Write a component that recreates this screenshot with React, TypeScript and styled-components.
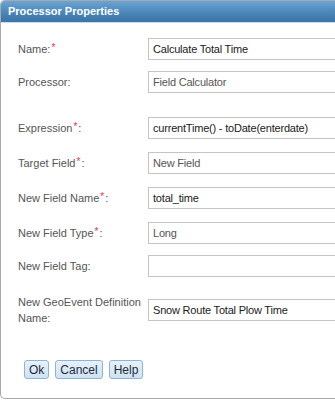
import styled, { createGlobalStyle } from 'styled-components';

const GlobalStyle = createGlobalStyle`
  html, body {
    margin: 0;
    padding: 0;
    background: #ffffff;
  }
`;

type Field = {
  label: string;
  required?: 'before' | 'after';
  value: string;
  muted?: boolean;
  top: number;
};

const fields: Field[] = [
  { label: 'Name', required: 'after', value: 'Calculate Total Time', top: 15 },
  { label: 'Processor', value: 'Field Calculator', muted: true, top: 11 },
  { label: 'Expression', required: 'before', value: 'currentTime() - toDate(enterdate)', top: 24 },
  { label: 'Target Field', required: 'before', value: 'New Field', muted: true, top: 13 },
  { label: 'New Field Name', required: 'before', value: 'total_time', top: 13 },
  { label: 'New Field Type', required: 'before', value: 'Long', muted: true, top: 13 },
  { label: 'New Field Tag', value: '', top: 11 },
  { label: 'New GeoEvent Definition Name', value: 'Snow Route Total Plow Time', top: 17 },
];

const FieldLabel = ({ label, required }: { label: string; required?: 'before' | 'after' }) => {
  if (required === 'before') {
    return (
      <Label>
        {label}
        <Star>*</Star>:
      </Label>
    );
  }
  if (required === 'after') {
    return (
      <Label>
        {`${label}:`}
        <Star>*</Star>
      </Label>
    );
  }
  return <Label>{`${label}:`}</Label>;
};

const App = () => {
  return (
    <>
      <GlobalStyle />
      <Dialog>
        <TitleBar>Processor Properties</TitleBar>
        <Body>
          {fields.map((f) => (
            <Row key={f.label} $top={f.top}>
              <FieldLabel label={f.label} required={f.required} />
              <Input $muted={f.muted}>{f.value}</Input>
            </Row>
          ))}
          <Buttons>
            <Button>Ok</Button>
            <Button>Cancel</Button>
            <Button>Help</Button>
          </Buttons>
        </Body>
      </Dialog>
    </>
  );
};

const Dialog = styled.div`
  width: 335px;
  height: 399px;
  box-sizing: border-box;
  border: 1px solid #a9a9a9;
  border-right: none;
  border-radius: 5px 0 0 5px;
  overflow: hidden;
  background: #ffffff;
  font-family: 'Liberation Sans', Arial, sans-serif;
`;

const TitleBar = styled.div`
  height: 22px;
  box-sizing: border-box;
  padding: 4px 0 0 7px;
  background: linear-gradient(#6aa5d4, #4a86b8 55%, #3b74a5);
  border-bottom: 1px solid #c8def0;
  color: #ffffff;
  font-size: 11px;
  font-weight: bold;
`;

const Body = styled.div`
  display: flex;
  flex-direction: column;
  padding-left: 17px;
`;

const Row = styled.div<{ $top: number }>`
  display: grid;
  grid-template-columns: 130px 1fr;
  align-items: center;
  margin-top: ${(p) => p.$top}px;
  min-height: 22px;
`;

const Label = styled.div`
  color: #555555;
  font-size: 11px;
  line-height: 16px;
  padding-right: 6px;
`;

const Star = styled.span`
  color: #e8333a;
  font-size: 10px;
  position: relative;
  top: -2px;
  margin: 0 1px;
`;

const Input = styled.div<{ $muted?: boolean }>`
  height: 22px;
  box-sizing: border-box;
  border: 1px solid #c4c4c4;
  border-right: none;
  padding: 4px 4px 0;
  color: ${(p) => (p.$muted ? '#555555' : '#1a1a1a')};
  font-size: 11px;
  letter-spacing: -0.2px;
  white-space: nowrap;
  overflow: hidden;
`;

const Buttons = styled.div`
  display: flex;
  gap: 6px;
  margin-top: 34px;
  padding-left: 6px;
`;

const Button = styled.button`
  height: 19px;
  padding: 0 4px;
  border: 1px solid #8fb3d3;
  border-radius: 3px;
  background: linear-gradient(#e6f1fb, #cfe2f3);
  color: #1e2b3a;
  font-family: 'Liberation Sans', Arial, sans-serif;
  font-size: 12px;
  line-height: 16px;
`;

export default App;
